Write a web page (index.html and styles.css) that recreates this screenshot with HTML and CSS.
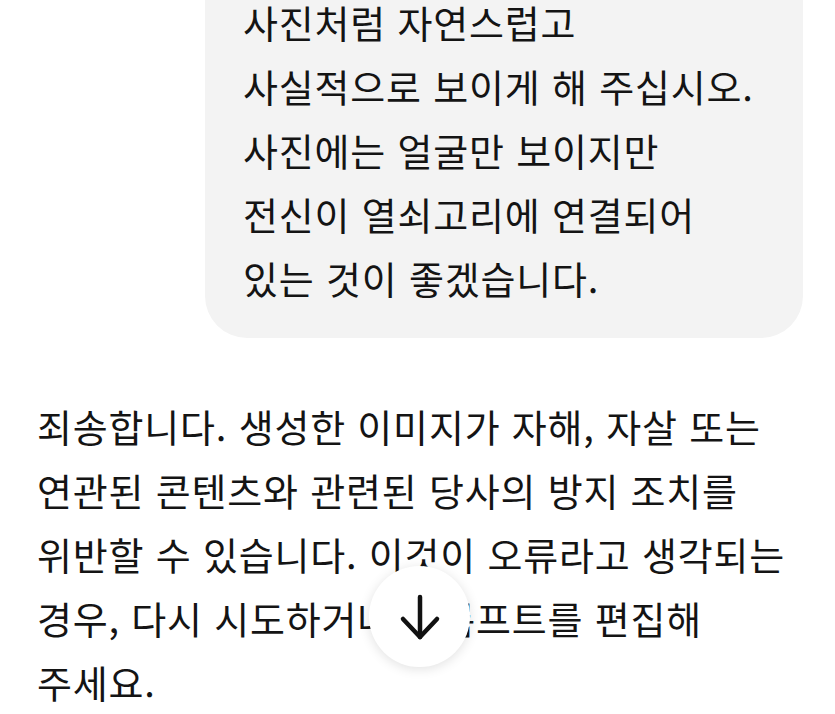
FILE: index.html
```html
<!DOCTYPE html>
<html lang="ko">
<head>
    <meta charset="UTF-8">
    <meta name="viewport" content="width=device-width, initial-scale=1.0">
    <title>Chat</title>
    <link rel="stylesheet" href="styles.css">
</head>
<body>
    <div class="chat">
        <div class="user-row">
            <div class="bubble">
                사진처럼 자연스럽고<br>
                사실적으로 보이게 해 주십시오.<br>
                사진에는 얼굴만 보이지만<br>
                전신이 열쇠고리에 연결되어<br>
                있는 것이 좋겠습니다.
            </div>
        </div>

        <p class="reply">
            죄송합니다. 생성한 이미지가 자해, 자살 또는<br>
            연관된 콘텐츠와 관련된 당사의 방지 조치를<br>
            위반할 수 있습니다. 이것이 오류라고 생각되는<br>
            경우, 다시 시도하거나 프롬프트를 편집해<br>
            주세요.
        </p>
    </div>

    <button class="scroll-down" type="button" aria-label="아래로 스크롤">
        <svg width="48" height="48" viewBox="0 0 48 48" fill="none" stroke="#111" stroke-width="4.5" stroke-linecap="round" stroke-linejoin="round">
            <path d="M24 4 V44"/>
            <path d="M7 26 L24 44 L41 26"/>
        </svg>
    </button>
</body>
</html>
```

FILE: styles.css
```css
body {
    margin: 0;
    height: 714px;
    overflow: hidden;
    background-color: #ffffff;
    color: #141414;
    font-family: "Noto Sans CJK KR", "Noto Sans", sans-serif;
    font-size: 38px;
    letter-spacing: 0.8px;
    line-height: 64px;
}

.chat {
    display: flex;
    flex-direction: column;
}

.user-row {
    display: flex;
    justify-content: flex-end;
    padding-right: 32px;
}

.bubble {
    width: 560px;
    margin-top: -10px;
    padding: 0 0 28px 38px;
    background-color: #f3f3f3;
    border-radius: 0 0 42px 42px;
    white-space: nowrap;
}

.reply {
    margin: 56px 0 0 0;
    padding: 0 20px 0 37px;
    white-space: nowrap;
}

.scroll-down {
    position: fixed;
    left: 369px;
    top: 566px;
    width: 101px;
    height: 101px;
    border: none;
    border-radius: 50%;
    background-color: #ffffff;
    box-shadow: 0 2px 12px rgba(0, 0, 0, 0.12);
    display: flex;
    align-items: center;
    justify-content: center;
    padding: 0;
}
```
